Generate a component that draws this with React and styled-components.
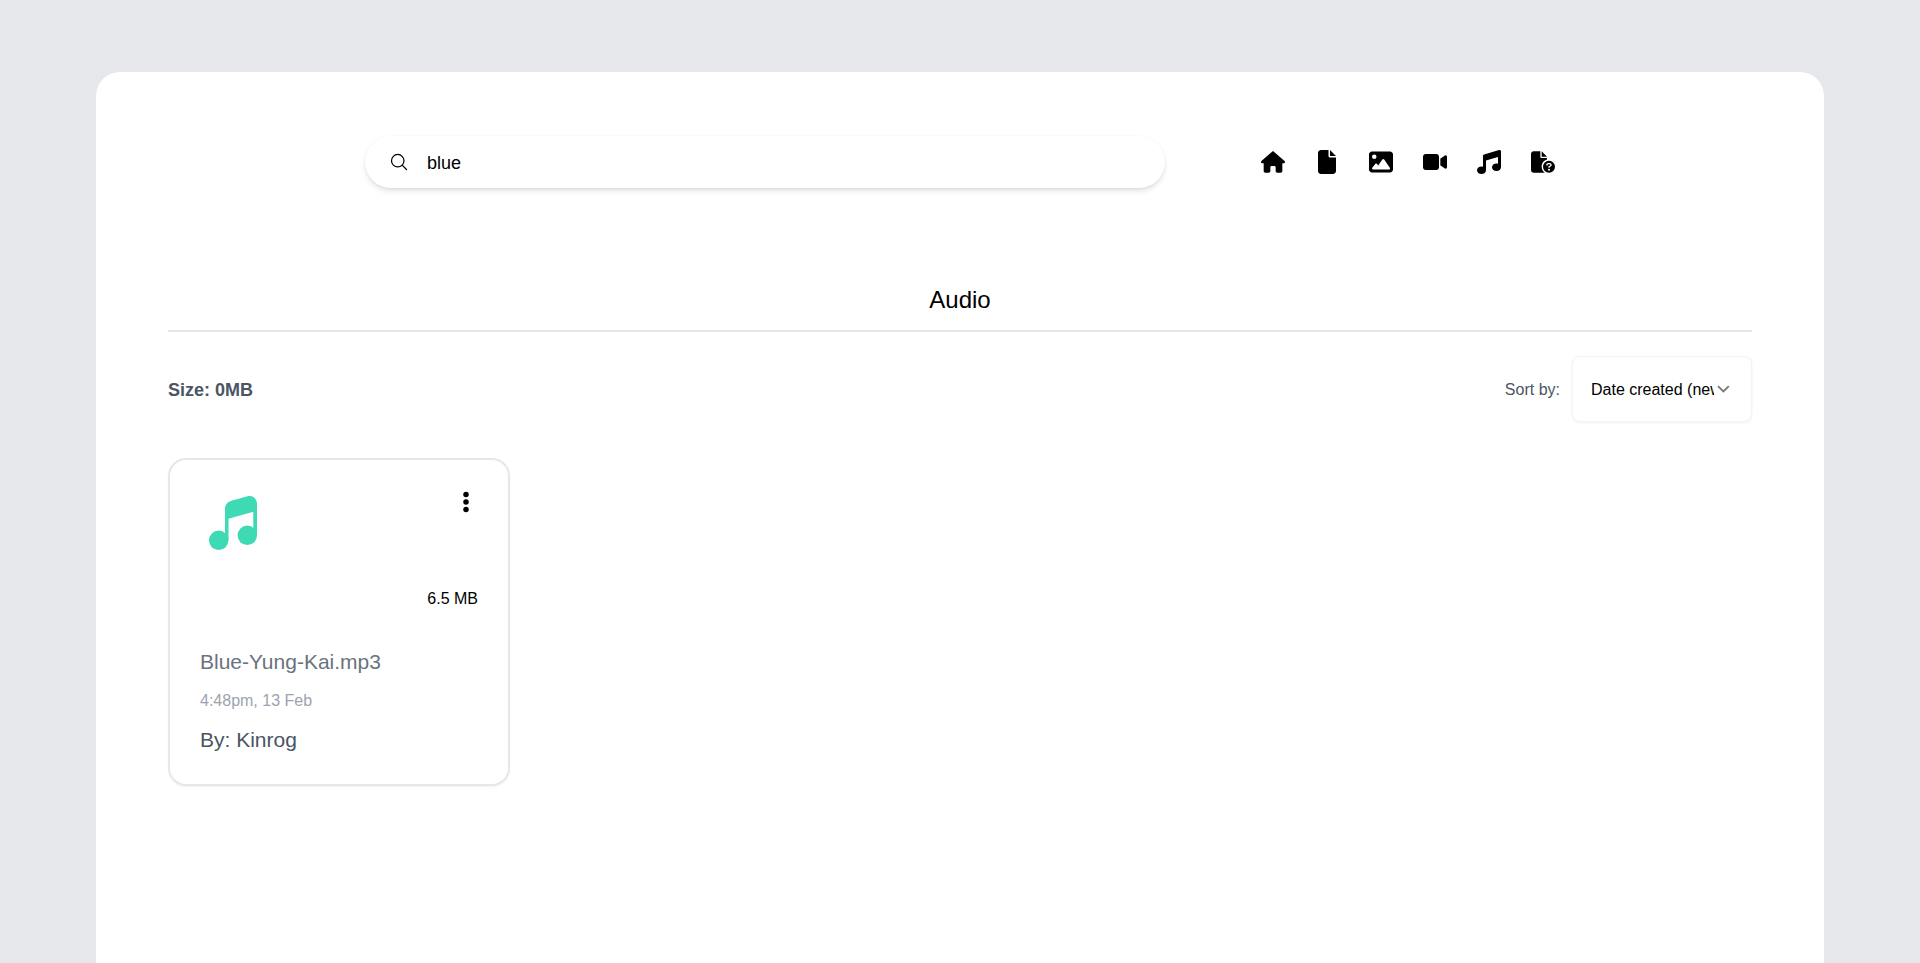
import React from "react";
import styled, { createGlobalStyle } from "styled-components";
import { FaHouse, FaFile, FaImage, FaVideo, FaMusic, FaFileCircleQuestion } from "react-icons/fa6";
import { HiOutlineMagnifyingGlass } from "react-icons/hi2";

const GlobalStyle = createGlobalStyle`
  *, *::before, *::after { box-sizing: border-box; }
  html, body { margin: 0; height: 100%; overflow: hidden; }
  body {
    background: #e5e7eb;
    color: #000;
    font-family: "Liberation Sans", Arial, sans-serif;
    font-size: 16px;
    line-height: 24px;
  }
  h1, p { margin: 0; font-weight: 400; }
  svg { display: block; flex: none; }
`;

const Page = styled.div`
  height: 100vh;
  padding: 72px 96px 0;
  overflow: hidden;
`;

const Panel = styled.main`
  min-height: 100vh;
  padding: 64px 72px;
  background: #fff;
  border-radius: 24px;
`;

const Header = styled.header`
  display: flex;
  justify-content: center;
  align-items: center;
  gap: 96px;
`;

const SearchBar = styled.label`
  display: flex;
  align-items: center;
  gap: 18px;
  width: 800px;
  height: 52px;
  padding: 0 24px;
  border-radius: 26px;
  box-shadow: 0 4px 6px -1px rgba(0, 0, 0, 0.1), 0 2px 4px -1px rgba(0, 0, 0, 0.06), 0 0 2px rgba(0, 0, 0, 0.05);
`;

const SearchInput = styled.input`
  flex: 1;
  padding: 2px 0 0;
  border: 0;
  outline: 0;
  background: transparent;
  color: #000;
  font: 18px/28px "Liberation Sans", Arial, sans-serif;
`;

const Nav = styled.nav`
  display: flex;
  align-items: center;
  gap: 30px;
`;

const Title = styled.h1`
  margin-top: 94px;
  padding-bottom: 12px;
  border-bottom: 2px solid #e5e7eb;
  font-size: 24px;
  line-height: 36px;
  text-align: center;
`;

const Toolbar = styled.div`
  display: flex;
  justify-content: space-between;
  align-items: center;
  margin-top: 24px;
  color: #4b5563;
`;

const TotalSize = styled.strong`
  padding-top: 2px;
  font-size: 18px;
  line-height: 28px;
`;

const Sort = styled.div`
  display: flex;
  align-items: center;
  gap: 12px;
`;

const SortLabel = styled.span`
  padding-top: 2px;
`;

const Select = styled.button`
  display: flex;
  align-items: center;
  gap: 2px;
  width: 180px;
  height: 66px;
  padding: 0 21px 0 18px;
  border: 1px solid #f3f4f6;
  border-radius: 8px;
  background: #fff;
  color: #000;
  font: 16px/24px "Liberation Sans", Arial, sans-serif;
  box-shadow: 0 1px 3px rgba(0, 0, 0, 0.06);
`;

const SelectValue = styled.span`
  flex: 1;
  padding-top: 2px;
  overflow: hidden;
  white-space: nowrap;
  text-align: left;
`;

const Card = styled.article`
  width: 342px;
  height: 328px;
  margin-top: 36px;
  padding: 30px;
  border: 2px solid #e5e7eb;
  border-radius: 18px;
  box-shadow: 0 1px 2px rgba(0, 0, 0, 0.05);
`;

const CardTop = styled.div`
  display: flex;
  justify-content: space-between;
  height: 121px;
`;

const TypeIcon = styled.div`
  padding-top: 1px;
  color: #3ddab4;
`;

const CardSide = styled.div`
  display: flex;
  flex-direction: column;
  align-items: flex-end;
  justify-content: space-between;
`;

const MenuButton = styled.button`
  padding: 0;
  border: 0;
  background: transparent;
  color: #000;
`;

const FileName = styled.p`
  margin-top: 36px;
  color: #6b7280;
  font-size: 21px;
  line-height: 30px;
`;

const Created = styled.p`
  margin-top: 12px;
  color: #9ca3af;
`;

const Owner = styled.p`
  margin-top: 12px;
  color: #4b5563;
  font-size: 21px;
  line-height: 30px;
`;

const navIcons = [FaHouse, FaFile, FaImage, FaVideo, FaMusic, FaFileCircleQuestion];

function NoteIcon() {
  return (
    <svg width="64" height="64" viewBox="0 0 64 64" fill="currentColor">
      <circle cx="18.7" cy="49.3" r="9.7" />
      <circle cx="47.3" cy="44.3" r="9.7" />
      <path d="M25 42.5V18c0-4 2.5-7.1 6.5-8.2l16-4.6C52.5 3.8 57 7.5 57 13v31.3h-3.7V20.7l-24.8 7v21.6H25z" />
    </svg>
  );
}

function DotsIcon() {
  return (
    <svg width="24" height="24" viewBox="0 0 24 24">
      <circle cx="12" cy="4.5" r="2.75" />
      <circle cx="12" cy="12" r="2.75" />
      <circle cx="12" cy="19.5" r="2.75" />
    </svg>
  );
}

function ChevronIcon() {
  return (
    <svg width="14" height="14" viewBox="0 0 14 14" fill="none" stroke="#777" strokeWidth="1.8">
      <path d="M2 4.2 7.4 9.4l5.4-5.2" />
    </svg>
  );
}

export default function App() {
  return (
    <>
      <GlobalStyle />
      <Page>
        <Panel>
          <Header>
            <SearchBar>
              <HiOutlineMagnifyingGlass size={20} />
              <SearchInput defaultValue="blue" />
            </SearchBar>
            <Nav>
              {navIcons.map((Icon, i) => (
                <Icon key={i} size={24} />
              ))}
            </Nav>
          </Header>
          <Title>Audio</Title>
          <Toolbar>
            <TotalSize>Size: 0MB</TotalSize>
            <Sort>
              <SortLabel>Sort by:</SortLabel>
              <Select>
                <SelectValue>Date created (newest)</SelectValue>
                <ChevronIcon />
              </Select>
            </Sort>
          </Toolbar>
          <Card>
            <CardTop>
              <TypeIcon>
                <NoteIcon />
              </TypeIcon>
              <CardSide>
                <MenuButton>
                  <DotsIcon />
                </MenuButton>
                <p>6.5 MB</p>
              </CardSide>
            </CardTop>
            <FileName>Blue-Yung-Kai.mp3</FileName>
            <Created>4:48pm, 13 Feb</Created>
            <Owner>By: Kinrog</Owner>
          </Card>
        </Panel>
      </Page>
    </>
  );
}
